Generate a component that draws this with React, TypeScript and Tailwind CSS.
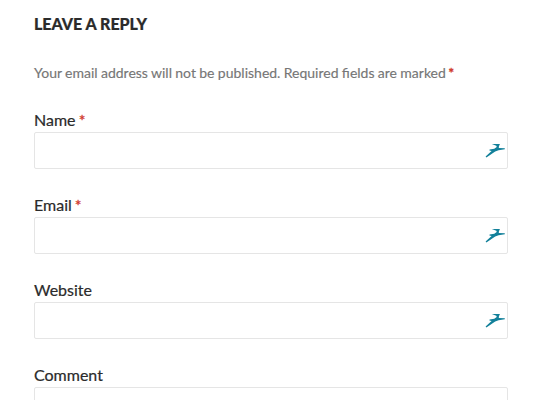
const Bird = () => (
  <svg className="mr-[2px] mt-[-1px] h-4 w-5 shrink-0" viewBox="0 0 20 16" fill="#12809a">
    <path d="M6.8 2 14.6 2 14.8 3.2 11.3 3.8Z" />
    <path d="M11.2 2.8 14.1 2.8 13.8 6 19.8 6.3V7.2L13.6 8.3 10.2 9.6 1.4 15.4 0.6 14.6 6.6 9.1 4.4 8.4 4.6 7.5 9.3 6.7 11.7 5Z" />
  </svg>
);

const Field = ({ label, required, icon = true }: { label: string; required?: boolean; icon?: boolean }) => (
  <div className="h-[85px]">
    <label className="block h-6 text-[16px] leading-6 text-[#2b2b2b] [-webkit-text-stroke:0.2px]">
      {label}
      {required && <span className="ml-[-1px] text-[#d0392b] [-webkit-text-stroke:0.3px_#d0392b]"> *</span>}
    </label>
    <div className="flex h-[37px] items-center justify-end rounded-[2px] border border-[#e5e5e5] bg-white">
      {icon && <Bird />}
    </div>
  </div>
);

export default function App() {
  return (
    <main className="h-[400px] w-[550px] overflow-hidden bg-white pl-[34px] pr-[42px] pt-3 font-['Lato',sans-serif]">
      <h3 className="h-6 text-[16px] font-black uppercase leading-6 text-[#2b2b2b] [-webkit-text-stroke:0.2px]">Leave a Reply</h3>
      <p className="mt-[25px] h-6 whitespace-nowrap text-[14px] leading-6 text-[#767676] [-webkit-text-stroke:0.15px] [word-spacing:-0.24px]">
        Your email address will not be published. Required fields are marked{' '}
        <span className="ml-[-1px] text-[#d0392b] [-webkit-text-stroke:0.4px_#d0392b]">*</span>
      </p>
      <form className="mt-[23px]">
        <Field label="Name" required />
        <Field label="Email" required />
        <Field label="Website" />
        <Field label="Comment" icon={false} />
      </form>
    </main>
  );
}
